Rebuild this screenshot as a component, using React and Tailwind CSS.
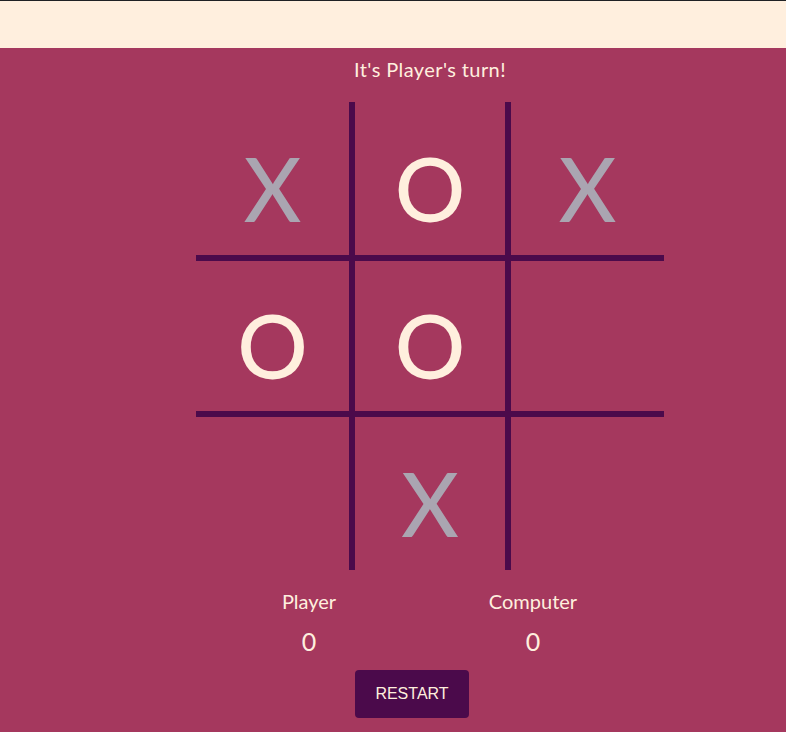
import React, { useState } from "react";

const start = ["X", "O", "X", "O", "O", "", "", "X", ""];

function cellBorders(i) {
  const row = Math.floor(i / 3);
  const col = i % 3;
  const classes = [];
  if (col === 0) classes.push("border-r-[3px]");
  if (col === 1) classes.push("border-x-[3px]");
  if (col === 2) classes.push("border-l-[3px]");
  if (row === 0) classes.push("border-b-[3px]");
  if (row === 1) classes.push("border-y-[3px]");
  if (row === 2) classes.push("border-t-[3px]");
  return classes.join(" ");
}

export default function App() {
  const [board, setBoard] = useState(start);
  const [score] = useState({ player: 0, computer: 0 });

  return (
    <div className="min-h-screen flex flex-col bg-[#a5385e] font-['Lato','Noto_Sans',sans-serif]">
      <header className="h-[48px] bg-[#ffefde] border-t border-[#1f2124]" />

      <main className="flex flex-col items-center pl-[74px]">
        <p className="mt-[7px] text-[20px] leading-[28px] text-[#ffefde] tracking-[0.4px]">
          It's Player's turn!
        </p>

        {/* board */}
        <div className="mt-[19px] grid grid-cols-3">
          {board.map((v, i) => (
            <button
              key={i}
              onClick={() => {
                if (v) return;
                const next = [...board];
                next[i] = "X";
                setBoard(next);
              }}
              className={`w-[156px] h-[156px] border-[#4b0a4b] flex items-center justify-center pt-[18px] text-[88px] leading-none ${cellBorders(i)} ${
                v === "X" ? "text-[#aaa5b1] font-medium" : "text-[#ffefde] font-medium"
              }`}
            >
              {v}
            </button>
          ))}
        </div>

        {/* scores */}
        <div className="mt-[17px] mr-[18px] flex gap-[104px] text-[#ffefde]">
          <div className="w-[120px] flex flex-col items-center">
            <span className="text-[20px] leading-[28px]">Player</span>
            <span className="mt-[10px] text-[25px] leading-[32px]">{score.player}</span>
          </div>
          <div className="w-[120px] flex flex-col items-center">
            <span className="text-[20px] leading-[28px]">Computer</span>
            <span className="mt-[10px] text-[25px] leading-[32px]">{score.computer}</span>
          </div>
        </div>

        <button
          onClick={() => setBoard(Array(9).fill(""))}
          className="mt-[13px] mr-[36px] w-[114px] h-[48px] rounded-[4px] bg-[#4b0a4b] text-[#ffefde] text-[16px] font-['Liberation_Sans',Arial,sans-serif]"
        >
          RESTART
        </button>
      </main>
    </div>
  );
}
